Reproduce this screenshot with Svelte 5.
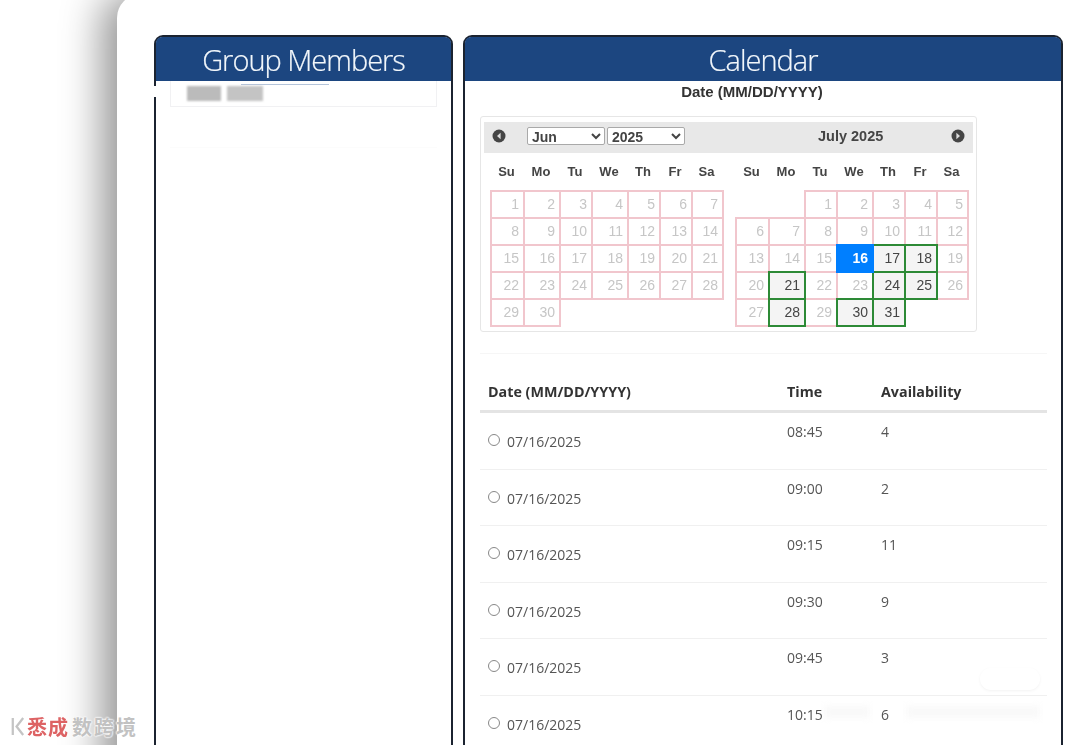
<script>
	const widths = '33px 36px 32px 36px 32px 32px 31px';
	const weekdays = ['Su', 'Mo', 'Tu', 'We', 'Th', 'Fr', 'Sa'];
	const open = [17, 18, 21, 24, 25, 28, 30, 31];

	const days = (n) => Array.from({ length: n }, (_, i) => i + 1);

	const months = [
		{ offset: 0, days: days(30), current: false },
		{ offset: 2, days: days(31), current: true }
	];

	const slots = [
		{ time: '08:45', left: 4 },
		{ time: '09:00', left: 2 },
		{ time: '09:15', left: 11 },
		{ time: '09:30', left: 9 },
		{ time: '09:45', left: 3 },
		{ time: '10:15', left: 6 }
	];

	function dayClass(month, d) {
		if (!month.current) return 'day';
		if (d === 16) return 'day selected';
		return open.includes(d) ? 'day open' : 'day';
	}
</script>

<div class="page">
	<div class="card">
		<section class="panel members">
			<h2>Group Members</h2>
			<div class="edgeGap"></div>
			<div class="member">
				<span class="scribble"></span>
				<div class="blurred"><i></i><i></i></div>
			</div>
			<div class="memberEmpty"></div>
		</section>

		<section class="panel calendar">
			<h2>Calendar</h2>
			<div class="dateLabel">Date (MM/DD/YYYY)</div>

			<div class="picker">
				<div class="pickerHead">
					<div class="headLeft">
						<svg class="nav" viewBox="0 0 14 14" width="14" height="14">
							<circle cx="7" cy="7" r="6.5" fill="#454545" />
							<path d="M8.6 3.8 5 7l3.6 3.2z" fill="#ddd" />
						</svg>
						<div class="selects">
							<select class="month"><option>Jun</option><option>Jul</option></select>
							<select class="year"><option>2025</option></select>
						</div>
					</div>
					<div class="headRight">
						<span class="title">July 2025</span>
						<svg class="nav next" viewBox="0 0 14 14" width="14" height="14">
							<circle cx="7" cy="7" r="6.5" fill="#454545" />
							<path d="M5.4 3.8 9 7l-3.6 3.2z" fill="#ddd" />
						</svg>
					</div>
				</div>

				<div class="monthRow">
					{#each months as month}
						<div class="monthBlock">
							<div class="weekdays" style="grid-template-columns: {widths}">
								{#each weekdays as w}
									<span>{w}</span>
								{/each}
							</div>
							<div class="grid" style="grid-template-columns: {widths}">
								{#each { length: month.offset } as _}
									<span></span>
								{/each}
								{#each month.days as d}
									<span class={dayClass(month, d)}>{d}</span>
								{/each}
							</div>
						</div>
					{/each}
				</div>
			</div>

			<div class="divider"></div>

			<div class="smudgePill"></div>
			<div class="smudgeBar one"></div>
			<div class="smudgeBar two"></div>

			<div class="slots">
				<div class="row head">
					<span>Date (MM/DD/YYYY)</span>
					<span>Time</span>
					<span>Availability</span>
				</div>
				{#each slots as slot}
					<div class="row">
						<label class="dateCell">
							<span class="radio"></span>
							07/16/2025
						</label>
						<span class="top">{slot.time}</span>
						<span class="top">{slot.left}</span>
					</div>
				{/each}
			</div>
		</section>
	</div>

	<div class="watermark">
		<svg viewBox="0 0 18 22" width="17" height="21">
			<path d="M4 2v18M15 2 8 11l7 9" fill="none" stroke="#fff" stroke-width="5" />
			<path d="M4 2v18M15 2 8 11l7 9" fill="none" stroke="#c4c4c4" stroke-width="2.4" />
		</svg>
		<span class="red">悉成</span>
		<span class="grey">数跨境</span>
	</div>
</div>

<style>
	:global(body) {
		margin: 0;
		background: #fff;
	}
	.page {
		position: relative;
		height: 745px;
		overflow: hidden;
		padding-left: 117px;
		box-sizing: border-box;
		background: #fff;
	}
	.card {
		display: flex;
		gap: 10px;
		height: 800px;
		margin-top: -6px;
		padding: 41px 17px 0 37px;
		box-sizing: border-box;
		background: #fff;
		border-radius: 24px 0 0 0;
		box-shadow: -15px 0 40px rgba(0, 0, 0, 0.42);
		filter: blur(0.35px);
	}
	.panel {
		position: relative;
		box-sizing: border-box;
		border: 2px solid #1b2330;
		border-radius: 9px 9px 0 0;
		background: #fff;
		font-family: 'Open Sans', sans-serif;
	}
	.members {
		width: 299px;
		flex: none;
	}
	.calendar {
		width: 600px;
		flex: none;
	}
	h2 {
		margin: 0;
		height: 44px;
		line-height: 45px;
		background: #1c4680;
		color: #f2f7fb;
		font-size: 29px;
		font-weight: 300;
		letter-spacing: -1px;
		-webkit-text-stroke: 0.2px #f2f7fb;
		text-align: center;
		border-radius: 6px 6px 0 0;
	}
	.edgeGap {
		position: absolute;
		left: -2px;
		top: 49px;
		width: 3px;
		height: 11px;
		background: #fff;
	}
	.member {
		position: relative;
		height: 25px;
		margin: 0 14px 0 14px;
		border: 1px solid #f1f1f3;
		border-top: none;
	}
	.memberEmpty {
		height: 40px;
		margin: 0 14px;
		border-bottom: 1px solid #fcfcfc;
	}
	.scribble {
		position: absolute;
		left: 70px;
		top: 3px;
		width: 88px;
		height: 1px;
		background: #b4c4da;
	}
	.blurred {
		position: absolute;
		left: 16px;
		top: 5px;
		display: flex;
		gap: 6px;
		filter: blur(1.2px);
	}
	.blurred i {
		width: 34px;
		height: 15px;
		background: #bbb;
	}
	.blurred i:last-child {
		width: 36px;
		background: #c4c4c4;
	}
	.dateLabel {
		height: 35px;
		padding-right: 22px;
		font-family: 'Liberation Sans', sans-serif;
		font-size: 15px;
		font-weight: 700;
		color: #333;
		text-align: center;
		line-height: 21px;
	}
	.picker {
		width: 497px;
		height: 216px;
		margin-left: 15px;
		padding: 5px 3px 0 3px;
		box-sizing: border-box;
		border: 1px solid #e6e6e6;
		border-radius: 3px;
		font-family: 'Liberation Sans', sans-serif;
	}
	.pickerHead {
		display: flex;
		height: 31px;
		background: #e8e8e8;
	}
	.headLeft {
		display: flex;
		align-items: center;
		width: 245px;
		padding: 0 0 3px 8px;
		box-sizing: border-box;
	}
	.selects {
		display: flex;
		gap: 2px;
		margin-left: 21px;
	}
	select {
		height: 18px;
		width: 78px;
		padding: 0;
		font-family: 'Liberation Sans', sans-serif;
		font-size: 14px;
		font-weight: 700;
		color: #444;
		background: #fff;
		border: 1px solid #a9a9a9;
		border-radius: 2px;
	}
	.headRight {
		position: relative;
		flex: 1;
		display: flex;
		align-items: center;
		padding: 0 0 3px 89px;
		box-sizing: border-box;
	}
	.title {
		font-size: 14.5px;
		font-weight: 700;
		color: #454545;
	}
	.next {
		position: absolute;
		right: 8px;
		top: 7px;
	}
	.monthRow {
		display: flex;
		gap: 12px;
		padding-left: 6px;
	}
	.monthBlock {
		width: 233px;
	}
	.weekdays {
		display: grid;
		height: 37px;
		align-items: center;
		font-size: 13px;
		font-weight: 700;
		color: #444;
		text-align: center;
		line-height: 36px;
	}
	.grid {
		display: grid;
		grid-auto-rows: 27px;
	}
	.day {
		position: relative;
		box-sizing: border-box;
		margin: 0 -2px -2px 0;
		padding: 0 4px 0 0;
		border: 2px solid #f1c6cd;
		background: #fff;
		font-size: 14px;
		line-height: 24px;
		text-align: right;
		color: #c6c6c6;
	}
	.open {
		z-index: 1;
		border-color: #2d8a36;
		background: #f4f4f4;
		color: #454545;
	}
	.selected {
		z-index: 2;
		border-color: #007fff;
		background: #007fff;
		color: #fff;
		font-weight: 700;
	}
	.divider {
		height: 1px;
		margin: 21px 14px 0 15px;
		background: #f6f6f6;
	}
	.slots {
		position: relative;
		margin: 21px 14px 0 15px;
		width: 567px;
		font-size: 14px;
		color: #555;
	}
	.row {
		display: grid;
		grid-template-columns: 299px 94px 1fr;
		height: 56.5px;
		box-sizing: border-box;
		padding: 9px 8px 0 8px;
		border-bottom: 1px solid #f0f0f0;
	}
	.row.head {
		height: 38px;
		padding-top: 7px;
		border-bottom: 3px solid #e4e4e4;
		font-size: 14.3px;
		font-weight: 700;
		color: #333;
	}
	.top {
		line-height: 20px;
	}
	.dateCell {
		display: flex;
		align-items: flex-start;
		gap: 7px;
		padding-top: 10px;
		line-height: 20px;
	}
	.radio {
		width: 10px;
		height: 10px;
		margin-top: 2px;
		border: 1px solid #888;
		border-radius: 50%;
		flex: none;
	}
	.smudgePill {
		position: absolute;
		left: 515px;
		top: 631px;
		width: 60px;
		height: 22px;
		border-radius: 11px;
		background: #fff;
		box-shadow: 0 1px 3px rgba(0, 0, 0, 0.05);
	}
	.smudgeBar {
		position: absolute;
		top: 669px;
		height: 12px;
		background: #f9f9f9;
		filter: blur(3px);
	}
	.one {
		left: 359px;
		width: 46px;
	}
	.two {
		left: 441px;
		width: 134px;
	}
	.watermark {
		position: absolute;
		left: 9px;
		bottom: 7px;
		display: flex;
		align-items: center;
		height: 24px;
		font-family: 'Noto Sans CJK SC', sans-serif;
		font-size: 20px;
		font-weight: 700;
	}
	.red {
		margin-left: 1px;
		color: #d8484a;
		letter-spacing: 1px;
		opacity: 0.85;
	}
	.grey {
		margin-left: 3px;
		color: #c2c2c2;
		text-shadow: 0 0 2px #fff, 0 0 2px #fff, 0 0 2px #fff;
		letter-spacing: 2px;
	}
</style>
